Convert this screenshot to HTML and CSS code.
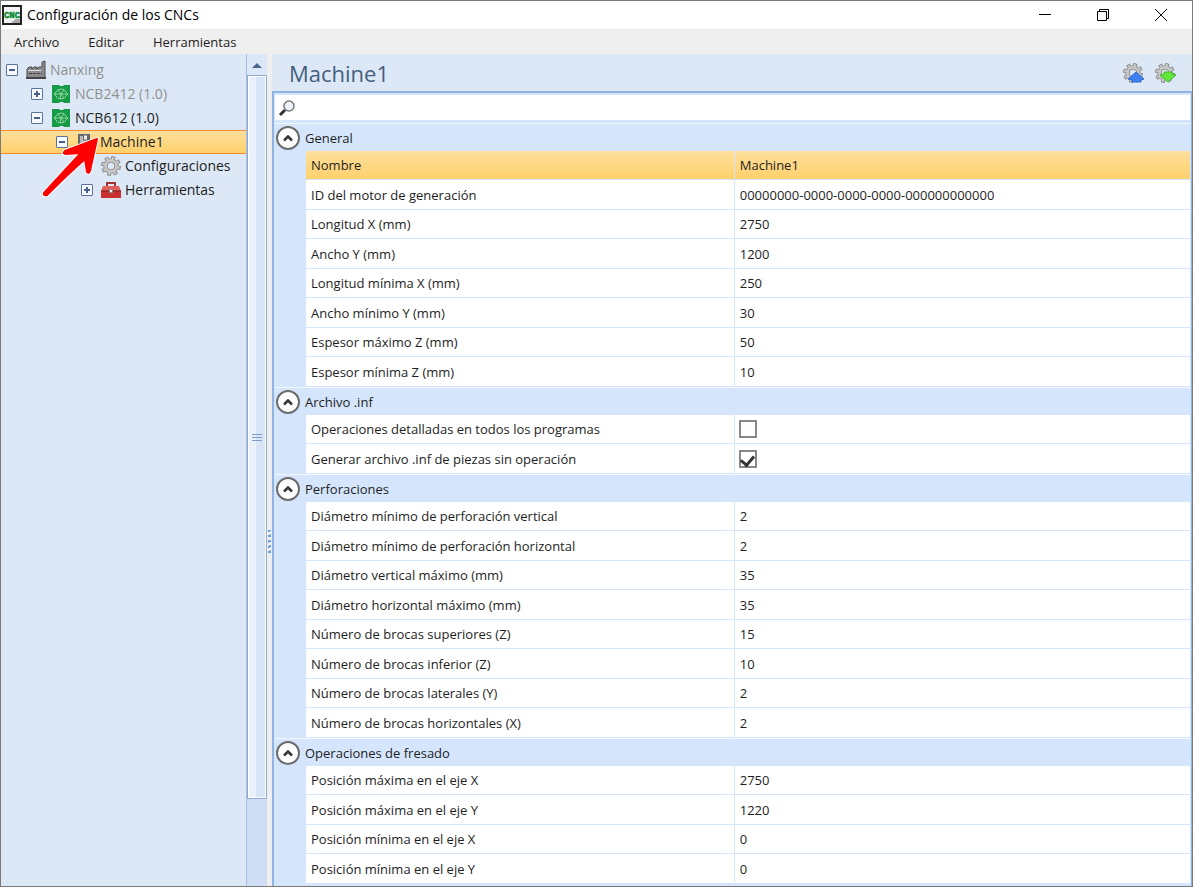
FILE: index.html
```html
<!DOCTYPE html>
<html lang="es">
<head>
    <meta charset="utf-8">
    <title>Configuración de los CNCs</title>
    <link rel="stylesheet" href="styles.css">
</head>
<body>
<!-- shared icons -->
<svg class="defs" width="0" height="0">
    <symbol id="cnc" viewBox="0 0 20 20">
        <path d="M1 1h7l1 1h3l1-1h6v18h-6l-1-1H9l-1 1H1z" fill="#159a45"/>
        <g fill="none" stroke="#8fd6a2">
            <path d="M5 8q1-3 5-3t5 3M5 12q1 3 5 3t5-3"/>
            <path d="M3 10h14M5 8l-2 2 2 2M15 8l2 2-2 2M7 6l6 8M13 6q-4 3-4 9"/>
        </g>
    </symbol>
    <symbol id="gear" viewBox="0 0 20 20">
        <g fill="none">
            <circle cx="10" cy="10" r="8" stroke="#8a8a8a" stroke-width="4" stroke-dasharray="3.600 2.683"/>
            <circle cx="10" cy="10" r="5.500" stroke="#8a8a8a" stroke-width="4.500"/>
            <circle cx="10" cy="10" r="7.500" stroke="#cacaca" stroke-width="3" stroke-dasharray="2 3.890" stroke-dashoffset="-.7"/>
            <circle cx="10" cy="10" r="5.500" stroke="#c6c6c6" stroke-width="2.800"/>
        </g>
    </symbol>
    <symbol id="up" viewBox="0 0 12 8">
        <path d="M2 6.500l4-4 4 4" fill="none" stroke="#333" stroke-width="2.500"/>
    </symbol>
</svg>

<div class="window">
    <header class="titlebar">
        <svg class="logo" viewBox="0 0 20 20">
            <rect x="1" y="1" width="18" height="18" fill="#f4f4f4" stroke="#222" stroke-width="2"/>
            <text x="10" y="13" text-anchor="middle">CNC</text>
            <path d="M9 16h3l1-2h5v4h-7z" fill="#aaa"/>
        </svg>
        <h1>Configuración de los CNCs</h1>
        <button class="winbtn" aria-label="Minimizar"><svg viewBox="0 0 12 12"><path d="M0 5.500h12"/></svg></button>
        <button class="winbtn" aria-label="Restaurar"><svg viewBox="0 0 12 12"><path d="M.5 2.500h9v9h-9zM2.500 2.500v-2h9v9h-2"/></svg></button>
        <button class="winbtn" aria-label="Cerrar"><svg viewBox="0 0 12 12"><path d="M0 0l12 12M12 0L0 12"/></svg></button>
    </header>

    <nav class="menubar">
        <button>Archivo</button>
        <button>Editar</button>
        <button>Herramientas</button>
    </nav>

    <main class="content">
        <div class="tree">
            <ul>
                <li class="node off">
                    <button class="exp" aria-label="Contraer"></button>
                    <svg class="icon" viewBox="0 0 20 20">
                        <path d="M1 18V9l2-2h3v2l2-2h3v2l2-2h3V2l3-1v17z" fill="#8a8a8a" stroke="#4c4c4c"/>
                        <path d="M2 10.500h13" stroke="#ddd"/>
                        <path d="M3 13.500h13" stroke="#444" stroke-dasharray="3 1"/>
                        <path d="M0 18h20" stroke="#444" stroke-width="2"/>
                    </svg>
                    <span>Nanxing</span>
                </li>
                <li class="node off l1">
                    <button class="exp plus" aria-label="Expandir"></button>
                    <svg class="icon"><use href="#cnc"/></svg>
                    <span>NCB2412 (1.0)</span>
                </li>
                <li class="node l1">
                    <button class="exp" aria-label="Contraer"></button>
                    <svg class="icon"><use href="#cnc"/></svg>
                    <span>NCB612 (1.0)</span>
                </li>
                <li class="node l2 selected">
                    <button class="exp" aria-label="Contraer"></button>
                    <svg class="icon" viewBox="0 0 20 20">
                        <path d="M3 3h10v14H3z" fill="#bbb" stroke="#666" stroke-width="2"/>
                        <path d="M7.500 3h4v5h-4z" fill="#eee" stroke="#666"/>
                    </svg>
                    <span>Machine1</span>
                </li>
                <li class="node l3">
                    <i class="exp none"></i>
                    <svg class="icon"><use href="#gear"/></svg>
                    <span>Configuraciones</span>
                </li>
                <li class="node l3">
                    <button class="exp plus" aria-label="Expandir"></button>
                    <svg class="icon" viewBox="0 0 20 20">
                        <path d="M6 6V3h8v3" fill="none" stroke="#a03434" stroke-width="2"/>
                        <path d="M2 6h16l2 5H0z" fill="#e0605c"/>
                        <path d="M0 11h20v7H0z" fill="#c93030"/>
                        <path d="M0 11h20" stroke="#7d1818"/>
                        <path d="M8.500 9.500h3v3h-3z" fill="#eee" stroke="#888"/>
                    </svg>
                    <span>Herramientas</span>
                </li>
            </ul>
            <svg class="arrow" viewBox="0 0 62 72">
                <g stroke-linejoin="round" stroke-linecap="round">
                    <path class="halo" d="M58 10L26 22Q23 25 27 25L42 24Q25 42 5 64Q4 67 8 66Q28 46 46 30L48 43Q50 45 51 42z"/>
                    <path class="red" d="M58 10L26 22Q23 25 27 25L42 24Q25 42 5 64Q4 67 8 66Q28 46 46 30L48 43Q50 45 51 42z"/>
                </g>
            </svg>
        </div>

        <div class="scrollbar">
            <button aria-label="Subir"><svg viewBox="0 0 10 6"><path d="M0 6l5-5 5 5z"/></svg></button>
            <div class="thumb"><i></i></div>
        </div>
        <div class="splitter"><i></i></div>

        <section class="panel">
            <div class="heading">
                <h2>Machine1</h2>
                <button aria-label="Importar"><svg viewBox="0 0 22 20"><use href="#gear" width="20" height="20"/><path d="M13 9l8 7-3 1v2H9v-2l-4-1z" fill="#3f7ff0" stroke="#3568d0"/></svg></button>
                <button aria-label="Exportar"><svg viewBox="0 0 22 20"><use href="#gear" width="20" height="20"/><path d="M9 9h8v2l4 1-8 7-8-7 4-1z" fill="#60e83a" stroke="#43b82c"/></svg></button>
            </div>
            <div class="grid">
                <label class="search">
                    <svg viewBox="0 0 18 18"><path d="M2 16l5-5" stroke="#333" stroke-width="3"/><circle cx="11" cy="7" r="5" fill="#eef4fb" stroke="#777" stroke-width="1.500"/></svg>
                    <input type="text" aria-label="Buscar">
                </label>

                <section class="group">
                    <h3><button aria-label="Contraer"><svg><use href="#up"/></svg></button>General</h3>
                    <table>
                        <tr class="selected"><th>Nombre</th><td>Machine1</td></tr>
                        <tr><th>ID del motor de generación</th><td>00000000-0000-0000-0000-000000000000</td></tr>
                        <tr><th>Longitud X (mm)</th><td>2750</td></tr>
                        <tr><th>Ancho Y (mm)</th><td>1200</td></tr>
                        <tr><th>Longitud mínima X (mm)</th><td>250</td></tr>
                        <tr><th>Ancho mínimo Y (mm)</th><td>30</td></tr>
                        <tr><th>Espesor máximo Z (mm)</th><td>50</td></tr>
                        <tr><th>Espesor mínima Z (mm)</th><td>10</td></tr>
                    </table>
                </section>

                <section class="group">
                    <h3><button aria-label="Contraer"><svg><use href="#up"/></svg></button>Archivo .inf</h3>
                    <table>
                        <tr><th><label for="detail">Operaciones detalladas en todos los programas</label></th><td><input type="checkbox" id="detail"></td></tr>
                        <tr><th><label for="inf">Generar archivo .inf de piezas sin operación</label></th><td><input type="checkbox" id="inf" checked></td></tr>
                    </table>
                </section>

                <section class="group">
                    <h3><button aria-label="Contraer"><svg><use href="#up"/></svg></button>Perforaciones</h3>
                    <table>
                        <tr><th>Diámetro mínimo de perforación vertical</th><td>2</td></tr>
                        <tr><th>Diámetro mínimo de perforación horizontal</th><td>2</td></tr>
                        <tr><th>Diámetro vertical máximo (mm)</th><td>35</td></tr>
                        <tr><th>Diámetro horizontal máximo (mm)</th><td>35</td></tr>
                        <tr><th>Número de brocas superiores (Z)</th><td>15</td></tr>
                        <tr><th>Número de brocas inferior (Z)</th><td>10</td></tr>
                        <tr><th>Número de brocas laterales (Y)</th><td>2</td></tr>
                        <tr><th>Número de brocas horizontales (X)</th><td>2</td></tr>
                    </table>
                </section>

                <section class="group">
                    <h3><button aria-label="Contraer"><svg><use href="#up"/></svg></button>Operaciones de fresado</h3>
                    <table>
                        <tr><th>Posición máxima en el eje X</th><td>2750</td></tr>
                        <tr><th>Posición máxima en el eje Y</th><td>1220</td></tr>
                        <tr><th>Posición mínima en el eje X</th><td>0</td></tr>
                        <tr><th>Posición mínima en el eje Y</th><td>0</td></tr>
                    </table>
                </section>
            </div>
        </section>
    </main>
</div>
</body>
</html>
```
FILE: styles.css
```css
* {
    box-sizing: border-box;
}
body {
    margin: 0;
    padding: 0 2px 1px 0;
    height: 100vh;
    background: #fff;
    color: #1e1e1e;
    font: 13px/18px "Open Sans", "Noto Sans", sans-serif;
}
button {
    margin: 0;
    padding: 0;
    border: none;
    background: none;
    font: inherit;
    color: inherit;
}
svg {
    display: block;
}
.defs {
    position: absolute;
}
.window {
    display: flex;
    flex-direction: column;
    height: 100%;
    border: 1px solid #7a7a7a;
}

/* title bar and menu */
.titlebar {
    display: flex;
    align-items: center;
    height: 28px;
}
.logo {
    width: 20px;
    height: 20px;
    margin: 0 5px 0 1px;
}
.logo text {
    font: bold 9px "Liberation Mono", monospace;
    fill: #0b8a35;
    stroke: #0b8a35;
    stroke-width: 0.5px;
}
.titlebar h1 {
    margin: 0;
    flex: 1;
    font-size: 14px;
    font-weight: normal;
    color: #000;
}
.winbtn {
    width: 58px;
    height: 28px;
}
.winbtn svg {
    width: 12px;
    height: 12px;
    margin: auto;
    fill: none;
    stroke: #000;
}
.winbtn:last-child {
    margin-right: 2px;
}
.menubar {
    display: flex;
    gap: 29px;
    height: 25px;
    padding-left: 13px;
    background: #efefef;
}

.content {
    flex: 1;
    display: flex;
    min-height: 0;
    background: #dde8f6;
}

/* tree */
.tree {
    position: relative;
    width: 245px;
    font-size: 14px;
}
.tree ul {
    list-style: none;
    margin: 0;
    padding: 4px 0 0;
}
.node {
    display: flex;
    align-items: center;
    height: 24px;
    padding-left: 5px;
}
.l1 { padding-left: 30px; }
.l2 { padding-left: 55px; }
.l3 { padding-left: 80px; }
.off {
    color: #909090;
}
.node.selected {
    border: solid #f58a2c;
    border-width: 1px 0;
    background: linear-gradient(#fee09c, #ffd06b);
}
.icon {
    width: 20px;
    height: 20px;
    margin: 0 4px 0 8px;
}
.exp {
    width: 12px;
    height: 12px;
    border: 1px solid #5b7299;
    border-radius: 1px;
    background: linear-gradient(#4a6088, #4a6088) center / 6px 2px no-repeat #f6f9fd;
}
.exp.plus {
    background: linear-gradient(#4a6088, #4a6088) center / 6px 2px no-repeat,
                linear-gradient(#4a6088, #4a6088) center / 2px 6px no-repeat #f6f9fd;
}
.exp.none {
    visibility: hidden;
}
.arrow {
    position: absolute;
    left: 38px;
    top: 75px;
    width: 62px;
    height: 72px;
}
.halo {
    fill: #fff;
    stroke: #fff;
    stroke-width: 4px;
}
.red {
    fill: #fe0000;
    stroke: #fe0000;
    stroke-width: 2px;
}

/* scrollbar and splitter */
.scrollbar {
    width: 21px;
    padding-bottom: 87px;
    display: flex;
    flex-direction: column;
    border-left: 1px solid #a9bfdf;
    background: #cfdef5;
}
.scrollbar button {
    height: 21px;
    background: #dce8f8;
}
.scrollbar button svg {
    width: 10px;
    height: 6px;
    margin: auto;
    fill: #4a6590;
}
.thumb {
    flex: 1;
    display: flex;
    align-items: center;
    justify-content: center;
    border: 1px solid #8fa9d0;
    box-shadow: inset 0 0 0 1px #fff;
    background: linear-gradient(to right, #eaf1fc 45%, #d8e5f7 45%);
}
.thumb i {
    width: 10px;
    height: 7px;
    background: repeating-linear-gradient(#7e9dcb 0 1px, transparent 1px 3px);
}
.splitter {
    width: 5px;
    display: flex;
    align-items: center;
    justify-content: center;
    background: #efefef;
}
.splitter i {
    width: 3px;
    height: 24px;
    margin-top: 144px;
    background: repeating-linear-gradient(160deg, #6fa0e0 0 2px, transparent 2px 5px);
}

/* property panel */
.panel {
    flex: 1;
    display: flex;
    flex-direction: column;
    min-width: 0;
}
.heading {
    display: flex;
    align-items: center;
    gap: 10px;
    height: 37px;
    padding: 0 15px 0 17px;
}
.heading h2 {
    margin: 0;
    flex: 1;
    font-size: 22px;
    font-weight: normal;
    color: #44607f;
}
.heading svg {
    width: 22px;
    height: 20px;
}
.grid {
    flex: 1;
    padding: 2px 1px 0;
    border: 2px solid #8fb4e3;
    border-width: 2px 1px 0 2px;
    background: #d5e5fb;
}
.search {
    display: flex;
    align-items: center;
    height: 25px;
    margin-bottom: 3px;
    padding-left: 3px;
    background: #fff;
}
.search svg {
    width: 18px;
    height: 18px;
}
.search input {
    flex: 1;
    border: none;
    outline: none;
    font: inherit;
}
.group {
    border-top: 1px solid #f4f9ff;
    padding-left: 31px;
}
.group h3 {
    display: flex;
    align-items: center;
    gap: 5px;
    height: 27px;
    margin: 0 0 0 -30px;
    font-size: 13px;
    font-weight: normal;
}
.group h3 button {
    width: 24px;
    height: 24px;
    border: 2px solid #6c6c6c;
    border-radius: 50%;
    background: #fff;
}
.group h3 svg {
    width: 12px;
    height: 8px;
    margin: auto;
}
table {
    width: 100%;
    table-layout: fixed;
    border-collapse: separate;
    border-spacing: 0;
    background: #fff;
}
tr {
    height: 29px;
}
tr:nth-child(even) {
    height: 30px;
}
th, td {
    padding: 0 5px;
    border-bottom: 1px solid #d5e5fb;
    font-weight: normal;
    text-align: left;
}
th {
    width: 48.5%;
    border-right: 1px solid #d5e5fb;
}
tr.selected {
    background: linear-gradient(#fee09c, #ffd06b);
}
td input {
    appearance: none;
    display: block;
    width: 18px;
    height: 18px;
    margin: 0 0 0 -1px;
    padding: 1px;
    border: 2px solid #888;
    background: #fff;
}
td input:checked::before {
    content: "";
    display: block;
    width: 6px;
    height: 10px;
    margin: 0 auto;
    border: solid #333;
    border-width: 0 3px 3px 0;
    transform: rotate(40deg);
}
```
